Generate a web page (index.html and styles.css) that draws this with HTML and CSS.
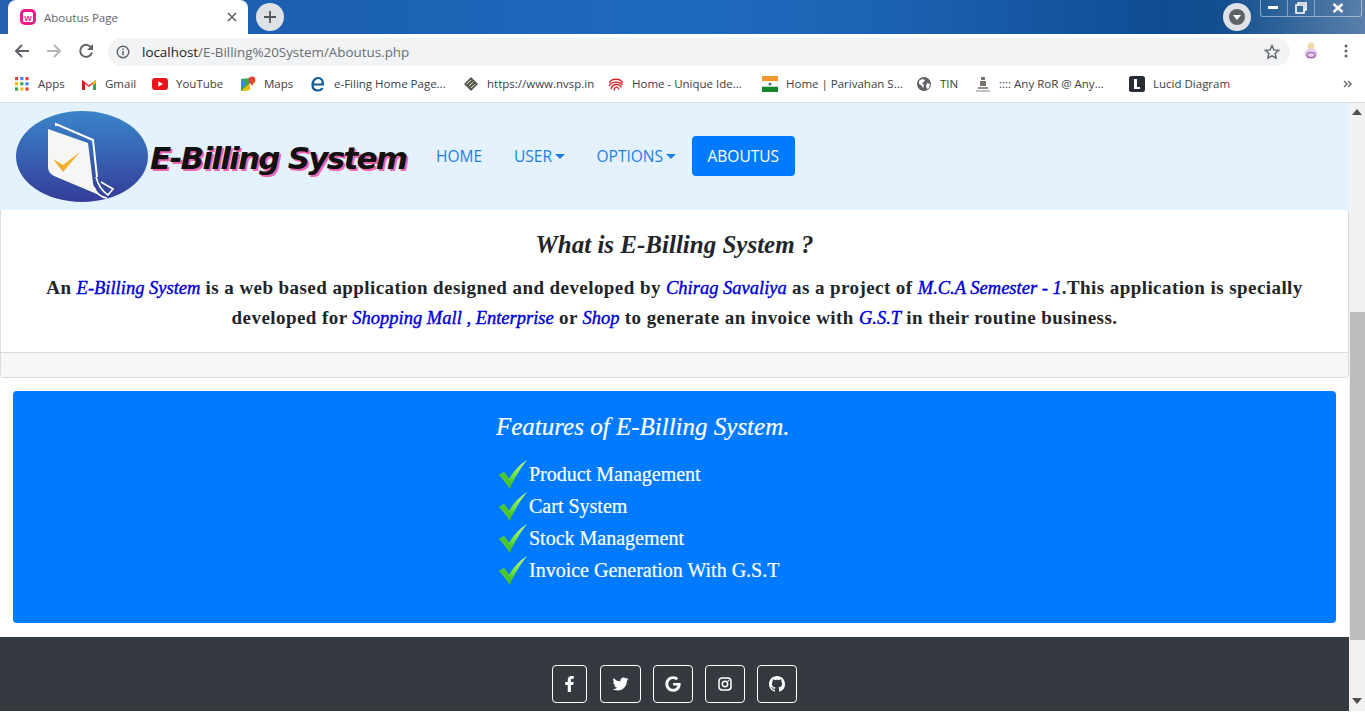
FILE: index.html
```html
<!DOCTYPE html>
<html lang="en">
<head>
    <meta charset="UTF-8">
    <meta name="viewport" content="width=device-width, initial-scale=1.0">
    <title>Aboutus Page</title>
    <link rel="stylesheet" href="styles.css">
</head>
<body>
<div class="browser">

    <!-- tab strip -->
    <div class="tabstrip">
        <div class="tab">
            <svg class="favicon" viewBox="0 0 16 16" width="16" height="16"><rect width="16" height="16" rx="5" fill="#ec1a8c"/><rect x="3" y="3" width="10" height="10" rx="1.5" fill="#fff"/><text x="8" y="11.5" text-anchor="middle" class="favicon-w">W</text></svg>
            <span class="tab-title">Aboutus Page</span>
            <svg class="tab-close" viewBox="0 0 10 10" width="10" height="10"><path d="M1 1l8 8M9 1l-8 8" stroke="#5f6368" stroke-width="1.6"/></svg>
        </div>
        <div class="newtab">
            <svg viewBox="0 0 14 14" width="14" height="14"><path d="M7 1v12M1 7h12" stroke="#51565c" stroke-width="1.8"/></svg>
        </div>
        <div class="avatar-btn"><span class="avatar-dot"></span></div>
        <div class="winbtns">
            <span class="winbtn min"><svg viewBox="0 0 12 6" width="12" height="6"><rect y="1" width="10" height="3" fill="#fff"/></svg></span>
            <span class="winbtn max"><svg viewBox="0 0 12 12" width="12" height="12"><path d="M3 3V1h8v7H9M1 3h8v8H1z" fill="none" stroke="#fff" stroke-width="1.6"/></svg></span>
            <span class="winbtn close"><svg viewBox="0 0 12 10" width="12" height="10"><path d="M1.5 1l9 8M10.5 1l-9 8" stroke="#fff" stroke-width="2.4"/></svg></span>
        </div>
    </div>

    <!-- address bar -->
    <div class="toolbar">
        <svg class="tool-icon" viewBox="0 0 16 16" width="16" height="16"><path d="M15 8H2M8 2L2 8l6 6" fill="none" stroke="#5f6368" stroke-width="2"/></svg>
        <svg class="tool-icon" viewBox="0 0 16 16" width="16" height="16"><path d="M1 8h13M8 2l6 6-6 6" fill="none" stroke="#b4b6b9" stroke-width="2"/></svg>
        <svg class="tool-icon" viewBox="0 0 16 16" width="16" height="16"><path d="M13.5 5A6 6 0 1 0 14 9.5" fill="none" stroke="#5f6368" stroke-width="2"/><path d="M15 1v6H9z" fill="#5f6368"/></svg>
        <div class="omnibox">
            <svg viewBox="0 0 14 14" width="14" height="14"><circle cx="7" cy="7" r="5.8" fill="none" stroke="#5f6368" stroke-width="1.4"/><path d="M7 6v4.2M7 3.6v1.4" stroke="#5f6368" stroke-width="1.5"/></svg>
            <span class="url"><span class="url-host">localhost</span>/E-Billing%20System/Aboutus.php</span>
            <svg class="star" viewBox="0 0 16 16" width="16" height="16"><path d="M8 1.6l1.9 4.3 4.7.5-3.5 3.1 1 4.6L8 11.8l-4.1 2.3 1-4.6L1.4 6.4l4.7-.5z" fill="none" stroke="#5f6368" stroke-width="1.4"/></svg>
        </div>
        <svg class="profile" viewBox="0 0 16 20" width="16" height="20"><circle cx="8" cy="5" r="3.5" fill="#f2d9a8"/><ellipse cx="8" cy="13" rx="6.5" ry="5.5" fill="#e6cdea"/><ellipse cx="8" cy="14" rx="4" ry="2.5" fill="none" stroke="#9a5aa8" stroke-width="1.2"/></svg>
        <svg class="menu-dots" viewBox="0 0 4 14" width="4" height="14"><circle cx="2" cy="2" r="1.5" fill="#5f6368"/><circle cx="2" cy="7" r="1.5" fill="#5f6368"/><circle cx="2" cy="12" r="1.5" fill="#5f6368"/></svg>
    </div>

    <!-- bookmarks -->
    <div class="bookmarks">
        <a class="bm bm-apps">
            <svg viewBox="0 0 14 14" width="14" height="14"><rect width="3.2" height="3.2" fill="#ea4335"/><rect x="5.2" width="3.2" height="3.2" fill="#4285f4"/><rect x="10.4" width="3.2" height="3.2" fill="#ea4335"/><rect y="5.2" width="3.2" height="3.2" fill="#fbbc05"/><rect x="5.2" y="5.2" width="3.2" height="3.2" fill="#34a853"/><rect x="10.4" y="5.2" width="3.2" height="3.2" fill="#4285f4"/><rect y="10.4" width="3.2" height="3.2" fill="#34a853"/><rect x="5.2" y="10.4" width="3.2" height="3.2" fill="#fbbc05"/><rect x="10.4" y="10.4" width="3.2" height="3.2" fill="#ea4335"/></svg>
            Apps
        </a>
        <a class="bm bm-gmail">
            <svg viewBox="0 0 16 12" width="16" height="12"><path d="M1 12V2l7 5 7-5v10h-3V6L8 9 4 6v6z" fill="#ea4335"/><path d="M1 12V2l3 2.2V12z" fill="#c5221f"/><path d="M15 12V2l-3 2.2V12z" fill="#34a853"/><path d="M12 4.200L15 2v3l-3 2z" fill="#fbbc05"/></svg>
            Gmail
        </a>
        <a class="bm bm-yt">
            <svg viewBox="0 0 16 12" width="16" height="12"><rect width="16" height="12" rx="3" fill="#e8141c"/><path d="M6.3 3.2L11 6 6.3 8.8z" fill="#fff"/></svg>
            YouTube
        </a>
        <a class="bm bm-maps">
            <svg viewBox="0 0 16 16" width="16" height="16"><path d="M1 3l9-1v12l-9 1z" fill="#34a853"/><path d="M1 15L10 7v7z" fill="#fbbc05"/><path d="M1 3l5 5-5 4z" fill="#4285f4"/><circle cx="12" cy="4" r="3.4" fill="#ea4335"/><path d="M9.4 5.5L12 10l2.6-4.5z" fill="#ea4335"/></svg>
            Maps
        </a>
        <a class="bm bm-efiling">
            <svg viewBox="0 0 16 16" width="16" height="16"><path d="M2.5 8.5h10.5C13 4.500 11 2 8 2S2.500 5 2.500 9s2.500 5.500 5.500 5.500c2 0 3.500-.8 4.500-2.500" fill="none" stroke="#0f5a96" stroke-width="2.200"/></svg>
            e-Filing Home Page...
        </a>
        <a class="bm bm-nvsp">
            <svg viewBox="0 0 16 16" width="16" height="16"><path d="M1 8l7-7 7 7-7 7z" fill="#5a5a50"/><path d="M4 8l4-4M6 10l4-4M8 12l4-4" stroke="#e4e4d8" stroke-width="1"/></svg>
            https://www.nvsp.in
        </a>
        <a class="bm bm-uid">
            <svg viewBox="0 0 16 16" width="16" height="16" fill="none" stroke="#d8232a" stroke-width="1.300"><path d="M1.500 7C3 2 13 2 14.500 7"/><path d="M1 10C3.500 5.500 11 4.500 14.500 9"/><path d="M3 13C4.500 8 10.500 6.500 13.500 11.500"/><path d="M6 14.500C6.500 10.500 10 10 11 13.500"/></svg>
            Home - Unique Ide...
        </a>
        <a class="bm bm-flag">
            <svg viewBox="0 0 16 16" width="16" height="16"><rect width="16" height="5.300" fill="#f7962d"/><rect y="5.300" width="16" height="5.400" fill="#fff"/><rect y="10.700" width="16" height="5.300" fill="#17862c"/><circle cx="8" cy="8" r="1.600" fill="#5a6f9c"/></svg>
            Home | Parivahan S...
        </a>
        <a class="bm bm-tin">
            <svg viewBox="0 0 14 14" width="14" height="14"><circle cx="7" cy="7" r="7" fill="#5f6368"/><path d="M2 4l3-2 3 1-1 2-2 1 2 2-1 3-2-3-2-1zM10 6l3 1-1 4-2 1-1-3z" fill="#fff"/></svg>
            TIN
        </a>
        <a class="bm bm-ror">
            <svg viewBox="0 0 16 16" width="16" height="16"><path d="M6 1h4v3H6zM5 5h6v5H5z" fill="#77736a"/><path d="M3 11h10v2H3z" fill="#96928a"/><path d="M1 15h14" stroke="#8a867e" stroke-width="1"/></svg>
            :::: Any RoR @ Any...
        </a>
        <a class="bm bm-lucid">
            <svg viewBox="0 0 16 16" width="16" height="16"><rect width="16" height="16" rx="2.500" fill="#282c33"/><path d="M5 3h3v8h3v2H5z" fill="#fff"/></svg>
            Lucid Diagram
        </a>
        <svg class="bm-more" viewBox="0 0 9 8" width="9" height="8"><path d="M1 1l3 3-3 3M5 1l3 3-3 3" fill="none" stroke="#5f6368" stroke-width="1.400"/></svg>
    </div>

    <div class="viewport">
        <div class="page">

            <nav class="navbar">
                <svg class="logo" viewBox="0 0 132 91" width="132" height="91">
                    <defs>
                        <linearGradient id="logoBg" x1="0" y1="0" x2="0" y2="1"><stop offset="0" stop-color="#3a85c9"/><stop offset="1" stop-color="#343c98"/></linearGradient>
                    </defs>
                    <ellipse cx="66" cy="45.500" rx="66" ry="45.500" fill="url(#logoBg)"/>
                    <path d="M40 15V13L77 29L81 66" fill="none" stroke="#fff" stroke-width="2"/>
                    <path d="M32 18L72 32L77 72C78 78 82 84 88 86L38 65C34 63 32 60 32 56z" fill="#f6f6f4"/>
                    <path d="M80 66C82 74 86 80 92 84L97 78L85 71M78 76C80 82 84 86 91 87" fill="none" stroke="#fff" stroke-width="1.600"/>
                    <path d="M37 48L47 54L64 41L47 61z" fill="#f6ae2d"/>
                </svg>
                <span class="brand">E-Billing System</span>
                <ul class="nav-links">
                    <li><a class="nav-link">HOME</a></li>
                    <li><a class="nav-link caret">USER</a></li>
                    <li><a class="nav-link caret">OPTIONS</a></li>
                    <li><a class="nav-link active">ABOUTUS</a></li>
                </ul>
            </nav>

            <div class="card">
                <div class="card-body">
                    <h3 class="card-title">What is E-Billing System ?</h3>
                    <p class="card-text">An <i>E-Billing System</i> is a web based application designed and developed by <i>Chirag Savaliya</i> as a project of <i>M.C.A Semester - 1</i>.This application is specially developed for <i>Shopping Mall , Enterprise</i> or <i>Shop</i> to generate an invoice with <i>G.S.T</i> in their routine business.</p>
                </div>
                <div class="card-footer"></div>
            </div>

            <div class="features">
                <h3 class="features-title">Features of E-Billing System.</h3>
                <ul class="features-list">
                    <li><svg class="tick" viewBox="0 0 28 29" width="28" height="29"><use href="#tickShape"/></svg>Product Management</li>
                    <li><svg class="tick" viewBox="0 0 28 29" width="28" height="29"><use href="#tickShape"/></svg>Cart System</li>
                    <li><svg class="tick" viewBox="0 0 28 29" width="28" height="29"><use href="#tickShape"/></svg>Stock Management</li>
                    <li><svg class="tick" viewBox="0 0 28 29" width="28" height="29"><use href="#tickShape"/></svg>Invoice Generation With G.S.T</li>
                </ul>
            </div>

            <footer class="footer">
                <a class="social"><svg viewBox="0 0 320 512" width="11" height="16"><path fill="#fff" d="M279.14 288l14.22-92.66h-88.91v-60.13c0-25.35 12.42-50.06 52.24-50.06h40.42V6.26S260.43 0 225.36 0c-73.22 0-121.08 44.38-121.08 124.72v70.62H22.89V288h81.39v224h100.17V288z"/></svg></a>
                <a class="social"><svg viewBox="0 0 512 512" width="17" height="16"><path fill="#fff" d="M459.37 151.716c.325 4.548.325 9.097.325 13.645 0 138.72-105.583 298.558-298.558 298.558-59.452 0-114.68-17.219-161.137-47.106 8.447.974 16.568 1.299 25.34 1.299 49.055 0 94.213-16.568 130.274-44.832-46.132-.975-84.792-31.188-98.112-72.772 6.498.974 12.995 1.624 19.818 1.624 9.421 0 18.843-1.3 27.614-3.573-48.081-9.747-84.143-51.98-84.143-102.985v-1.299c13.969 7.797 30.214 12.67 47.431 13.319-28.264-18.843-46.781-51.005-46.781-87.391 0-19.492 5.197-37.36 14.294-52.954 51.655 63.675 129.3 105.258 216.365 109.807-1.624-7.797-2.599-15.918-2.599-24.04 0-57.828 46.782-104.934 104.934-104.934 30.213 0 57.502 12.67 76.67 33.137 23.715-4.548 46.456-13.32 66.599-25.34-7.798 24.366-24.366 44.833-46.132 57.827 21.117-2.273 41.584-8.122 60.426-16.243-14.292 20.791-32.161 39.308-52.628 54.253z"/></svg></a>
                <a class="social"><svg viewBox="0 0 488 512" width="16" height="16"><path fill="#fff" d="M488 261.8C488 403.3 391.1 504 248 504 110.8 504 0 393.2 0 256S110.8 8 248 8c66.8 0 123 24.5 166.3 64.9l-67.5 64.9C258.5 52.6 94.3 116.6 94.3 256c0 86.5 69.1 156.6 153.7 156.6 98.2 0 135-70.4 140.8-106.9H248v-85.3h236.1c2.3 12.7 3.9 24.9 3.9 41.4z"/></svg></a>
                <a class="social"><svg viewBox="-1 -1 16 16" width="16" height="16" fill="none" stroke="#fff"><rect x="1" y="1" width="12" height="12" rx="3.200" stroke-width="1.500"/><circle cx="7" cy="7" r="2.700" stroke-width="1.500"/><circle cx="10.400" cy="3.600" r=".8" fill="#fff" stroke="none"/></svg></a>
                <a class="social"><svg viewBox="0 0 16 16" width="16" height="16"><path fill="#fff" d="M8 0C3.580 0 0 3.580 0 8c0 3.540 2.290 6.530 5.470 7.590.4.070.55-.17.55-.38 0-.19-.01-.82-.01-1.490-2.010.37-2.530-.49-2.690-.94-.09-.23-.48-.94-.82-1.130-.28-.15-.68-.52-.01-.53.63-.01 1.080.58 1.230.82.72 1.210 1.870.87 2.330.66.07-.52.28-.87.51-1.070-1.780-.2-3.640-.89-3.640-3.950 0-.87.31-1.590.82-2.150-.08-.2-.36-1.020.08-2.120 0 0 .67-.21 2.200.82.64-.18 1.320-.27 2-.27.68 0 1.360.09 2 .27 1.530-1.040 2.200-.82 2.200-.82.44 1.100.16 1.920.08 2.120.51.56.82 1.270.82 2.150 0 3.070-1.870 3.750-3.650 3.950.29.25.54.73.54 1.480 0 1.070-.01 1.930-.01 2.200 0 .21.15.46.55.38A8.013 8.013 0 0016 8c0-4.420-3.580-8-8-8z"/></svg></a>
            </footer>
        </div>

        <div class="scrollbar">
            <svg class="scroll-up" viewBox="0 0 10 6" width="10" height="6"><path d="M5 0l5 6H0z" fill="#505050"/></svg>
            <div class="scroll-thumb"></div>
            <svg class="scroll-down" viewBox="0 0 10 6" width="10" height="6"><path d="M5 6l5-6H0z" fill="#505050"/></svg>
        </div>
    </div>
</div>

<!-- green tick used by the features list -->
<svg class="defs-only" width="0" height="0">
    <defs>
        <linearGradient id="tickFill" x1="0" y1="0" x2="0" y2="1"><stop offset="0" stop-color="#c8ff80"/><stop offset="0.6" stop-color="#5fe03a"/><stop offset="1" stop-color="#2aa51e"/></linearGradient>
        <g id="tickShape">
            <path d="M0 15l5-3 5 7C14 12 20 5 28 0 22 8 15 18 11 29 8 24 4 19 0 15z" fill="url(#tickFill)"/>
            <path d="M5 12l5 7 1 10C8 24 4 19 0 15z" fill="#4cc82e"/>
        </g>
    </defs>
</svg>
</body>
</html>
```

FILE: styles.css
```css
* {
    box-sizing: border-box;
}

html, body {
    margin: 0;
    padding: 0;
    height: 100%;
    overflow: hidden;
}

body {
    font-family: 'Open Sans', sans-serif;
    background-color: #fff;
}

.browser {
    display: flex;
    flex-direction: column;
    height: 713px;
    padding-bottom: 2px;
    overflow: hidden;
}

/* tab strip */
.tabstrip {
    height: 34px;
    flex: none;
    display: flex;
    align-items: flex-end;
    padding-left: 8px;
    background: linear-gradient(90deg, #2560b0 0, #1b60b2 25%, #1f6abf 50%, #1c62b2 65%, #0f4c93 85%, #14508f 90%, #5a80aa 100%);
}

.tab {
    width: 240px;
    height: 34px;
    background-color: #fff;
    border-radius: 8px 8px 0 0;
    display: flex;
    align-items: center;
    padding: 0 11px 0 12px;
}

.favicon-w {
    font-family: 'Liberation Sans', sans-serif;
    font-size: 8px;
    font-weight: bold;
    fill: #ec1a8c;
}

.tab-title {
    margin-left: 8px;
    font-size: 11.500px;
    color: #5f6368;
    flex: 1;
}

.newtab {
    width: 28px;
    height: 28px;
    margin: 0 0 3px 8px;
    border-radius: 50%;
    background-color: #dee1e6;
    display: flex;
    align-items: center;
    justify-content: center;
}

.avatar-btn {
    width: 28px;
    height: 28px;
    margin: 0 0 3px auto;
    border-radius: 50%;
    background-color: #dfe3e8;
    display: flex;
    align-items: center;
    justify-content: center;
}

.avatar-dot {
    width: 16px;
    height: 16px;
    border-radius: 50%;
    background-color: #5f6368;
    position: relative;
}

.avatar-dot::after {
    content: '';
    position: absolute;
    left: 4px;
    top: 6px;
    border-left: 4px solid transparent;
    border-right: 4px solid transparent;
    border-top: 5px solid #fff;
}

.winbtns {
    display: flex;
    align-self: flex-start;
    height: 17px;
    margin: 0 3px 0 9px;
    border: 1px solid rgba(255, 255, 255, 0.45);
    border-top: none;
    border-radius: 0 0 3px 3px;
}

.winbtn {
    display: flex;
    align-items: center;
    justify-content: center;
    height: 16px;
    border-right: 1px solid rgba(255, 255, 255, 0.4);
}

.winbtn.min {
    width: 27px;
}

.winbtn.max {
    width: 27px;
}

.winbtn.close {
    width: 46px;
    border-right: none;
}

/* address bar */
.toolbar {
    height: 34px;
    flex: none;
    background-color: #fff;
    display: flex;
    align-items: center;
    padding-left: 14px;
}

.tool-icon {
    margin-right: 16px;
}

.omnibox {
    width: 1182px;
    height: 28px;
    margin-left: -2px;
    margin-top: 2px;
    border-radius: 14px;
    background-color: #f1f3f4;
    display: flex;
    align-items: center;
    padding: 0 10px 0 8px;
}

.url {
    margin-left: 12px;
    font-size: 13.400px;
    color: #6a6e73;
    flex: 1;
}

.url-host {
    color: #202124;
}

.profile {
    margin-left: 13px;
}

.menu-dots {
    margin-left: 25px;
}

/* bookmarks */
.bookmarks {
    height: 35px;
    flex: none;
    display: flex;
    align-items: center;
    padding: 0 0 3px 15px;
    background-color: #fff;
    border-bottom: 1px solid #d8dde2;
    font-size: 11.500px;
    color: #3c4043;
}

.bm {
    display: flex;
    align-items: center;
    gap: 8px;
    white-space: nowrap;
    flex: none;
}

.bm-apps { width: 66px; gap: 9px; }
.bm-gmail { width: 71px; }
.bm-yt { width: 88px; }
.bm-maps { width: 70px; }
.bm-efiling { width: 153px; }
.bm-nvsp { width: 145px; }
.bm-uid { width: 154px; }
.bm-flag { width: 155px; }
.bm-tin { width: 58px; gap: 9px; }
.bm-ror { width: 154px; }
.bm-lucid { width: 214px; }

.bm-more {
    flex: none;
}

/* page */
.viewport {
    flex: 1;
    min-height: 0;
    display: flex;
}

.page {
    flex: 1;
    min-width: 0;
    overflow: hidden;
    background-color: #fff;
}

.scrollbar {
    width: 16px;
    flex: none;
    background-color: #f1f1f1;
    display: flex;
    flex-direction: column;
    align-items: center;
}

.scroll-up {
    margin-top: 6px;
}

.scroll-thumb {
    width: 15px;
    height: 328px;
    margin-top: 197px;
    margin-left: 1px;
    background-color: #bdbdbd;
}

.scroll-down {
    margin-top: auto;
    margin-bottom: 7px;
}

.navbar {
    height: 107px;
    background-color: #e3f2fd;
    display: flex;
    align-items: center;
    padding: 0 16px 1px;
}

.logo {
    flex: none;
}

.brand {
    margin-left: 2px;
    margin-top: 4px;
    width: 270px;
    font-family: 'DejaVu Sans', sans-serif;
    font-size: 31px;
    font-weight: bold;
    font-style: italic;
    color: #111;
    text-shadow: 2px 2px 0 #ee66b0;
    white-space: nowrap;
    letter-spacing: -1.750px;
}

.nav-links {
    list-style: none;
    display: flex;
    margin: 0;
    padding: 0;
}

.nav-link {
    display: block;
    height: 40px;
    line-height: 40px;
    padding: 0 16px;
    font-size: 15.500px;
    color: #1f7fe6;
}

.caret::after {
    content: '';
    display: inline-block;
    margin-left: 2.500px;
    vertical-align: 3px;
    border-left: 5px solid transparent;
    border-right: 5px solid transparent;
    border-top: 5px solid #1f7fe6;
}

.nav-link.active {
    background-color: #007bff;
    color: #fff;
    border-radius: 4px;
}

.card {
    height: 168px;
    display: flex;
    flex-direction: column;
    border: 1px solid #dcdcdc;
    border-top: none;
    border-radius: 0 0 4px 4px;
    font-family: 'Liberation Serif', serif;
    color: #212529;
}

.card-body {
    flex: 1;
    padding: 20px 20px 0;
    text-align: center;
}

.card-title {
    margin: 0 0 13px;
    font-size: 25px;
    line-height: 30px;
    font-style: italic;
    font-weight: bold;
}

.card-text {
    margin: 0;
    font-size: 19px;
    line-height: 30px;
    font-weight: bold;
    letter-spacing: 0.430px;
}

.card-text i {
    color: #0000d8;
    font-size: 18.500px;
    font-weight: normal;
    letter-spacing: 0;
    -webkit-text-stroke: 0.400px #0000d8;
}

.card-footer {
    height: 25px;
    background-color: #f7f7f7;
    border-top: 1px solid #dcdcdc;
    border-radius: 0 0 4px 4px;
}

.features {
    height: 232px;
    margin: 13px 13px 14px;
    padding: 21px 0 0 483px;
    background-color: #007bff;
    border-radius: 4px;
    font-family: 'Liberation Serif', serif;
    color: #fff;
    -webkit-text-stroke: 0.200px #fff;
}

.features-title {
    margin: 0 0 16px;
    font-size: 25px;
    line-height: 30px;
    font-style: italic;
    font-weight: normal;
}

.features-list {
    list-style: none;
    margin: 0;
    padding: 0 0 0 3px;
    font-size: 20px;
}

.features-list li {
    display: flex;
    align-items: center;
    height: 32px;
}

.tick {
    flex: none;
    margin-right: 2px;
}

.footer {
    height: 76px;
    background-color: #343a40;
    display: flex;
    justify-content: center;
    align-items: flex-start;
    gap: 12px;
    padding: 28px 1px 0 0;
}

.social {
    height: 38px;
    padding: 0 11px;
    border: 1px solid #fff;
    border-radius: 4px;
    display: flex;
    align-items: center;
    justify-content: center;
}

.social:first-child {
    margin-right: 1px;
}
```
